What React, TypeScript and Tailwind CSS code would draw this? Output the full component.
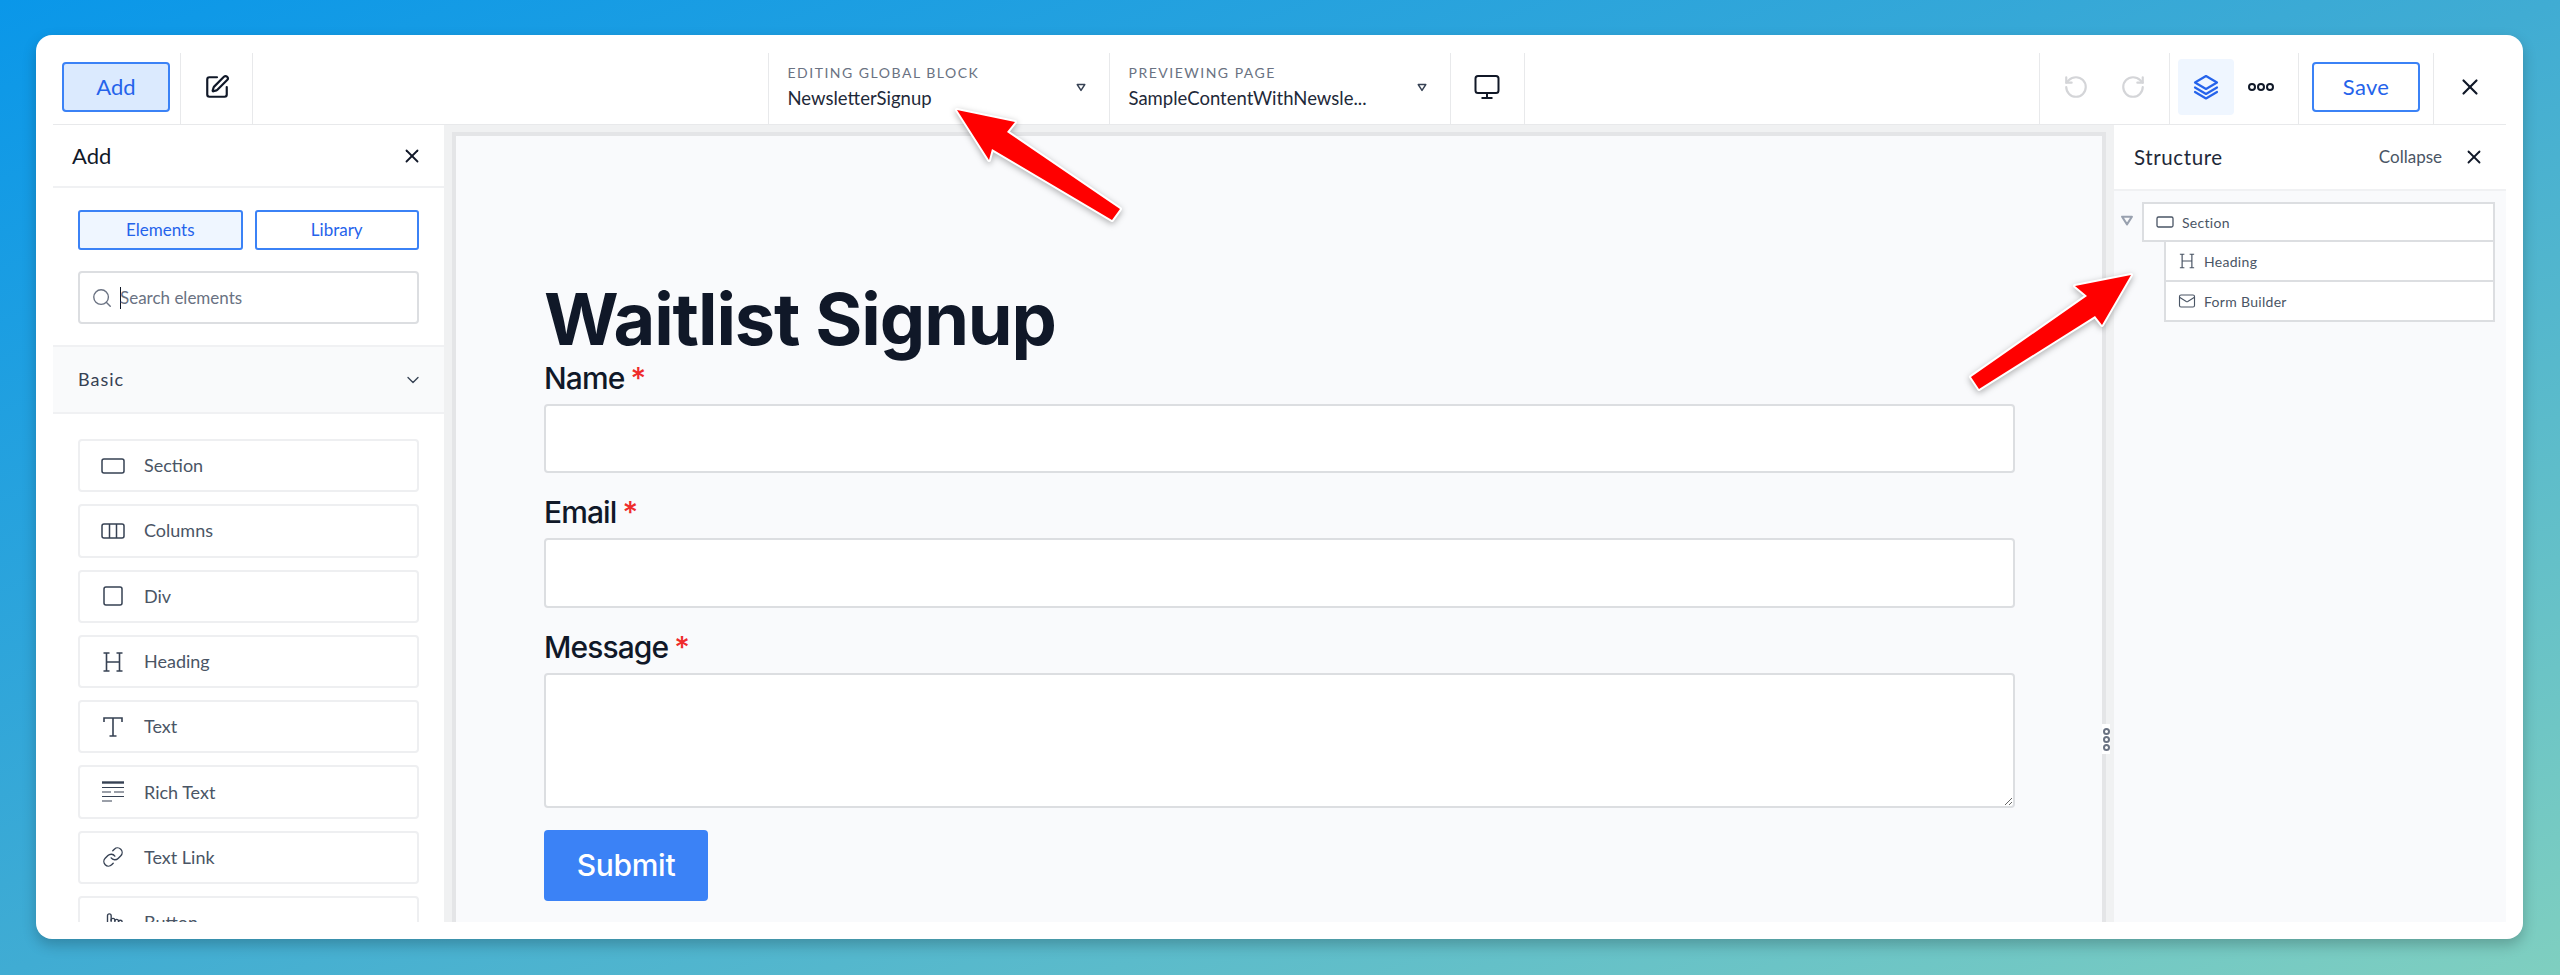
import { ChevronDown, Link as LinkIcon, Mail, Pointer, RotateCcw, RotateCw, Search, SquarePen, X } from "lucide-react";
import type { ReactNode } from "react";

const Box = ({ w = 22, h = 14 }: { w?: number; h?: number }) => (
    <svg width="24" height="24" viewBox="0 0 24 24" fill="none" stroke="currentColor" strokeWidth="1.5">
        <rect x={12 - w / 2} y={12 - h / 2} width={w} height={h} rx="2" />
    </svg>
);

const ColumnsIcon = () => (
    <svg width="24" height="24" viewBox="0 0 24 24" fill="none" stroke="currentColor" strokeWidth="1.5">
        <rect x="1" y="5" width="22" height="14" rx="2" />
        <path d="M8.5 5v14M15.5 5v14" />
    </svg>
);

const HeadingIcon = ({ size = 24 }: { size?: number }) => (
    <svg width={size} height={size} viewBox="0 0 24 24" fill="none" stroke="currentColor" strokeWidth="1.6">
        <path d="M5.5 3v18M18.5 3v18M5.5 12h13M2.5 3h6M15.5 3h6M2.5 21h6M15.5 21h6" />
    </svg>
);

const TextIcon = () => (
    <svg width="24" height="24" viewBox="0 0 24 24" fill="none" stroke="currentColor" strokeWidth="1.6">
        <path d="M12 3v18M8.5 21h7M3 7V3h18v4" />
    </svg>
);

const RichTextIcon = () => (
    <svg width="24" height="24" viewBox="0 0 24 24" fill="none" stroke="currentColor">
        <path strokeWidth="2.4" d="M1 2.5h22" />
        <path strokeWidth="1.1" d="M1 7.5h22M1 12h9M13 12h10M1 16.5h22M1 21h10" />
    </svg>
);

const LayersIcon = () => (
    <svg width="28" height="28" viewBox="0 0 28 28" fill="none" stroke="#2563eb" strokeWidth="2.2" strokeLinejoin="round" strokeLinecap="round">
        <path d="M14 3 3 9.5 14 16l11-6.5L14 3Z" />
        <path d="m3 14.5 11 6.5 11-6.5" />
        <path d="m3 19 11 6.5L25 19" />
    </svg>
);

const MonitorIcon = () => (
    <svg width="26" height="26" viewBox="0 0 26 26" fill="none" stroke="#111827" strokeWidth="2">
        <rect x="1.5" y="2" width="23" height="17" rx="2.5" />
        <path d="M13 19v4M7.5 24h11" />
    </svg>
);

const Triangle = ({ className = "" }: { className?: string }) => (
    <svg viewBox="0 0 12 10" fill="none" stroke="currentColor" strokeWidth="1.8" strokeLinejoin="round" className={className}>
        <path d="M1.5 1.5h9L6 8.5Z" />
    </svg>
);

const Dots = ({ vertical = false }: { vertical?: boolean }) => (
    <div className={`flex items-center gap-[1px] ${vertical ? "flex-col" : ""}`}>
        {[0, 1, 2].map((i) => (
            <span
                key={i}
                className={vertical ? "h-[7px] w-[7px] rounded-full border-2 border-gray-500" : "h-[8px] w-[8px] rounded-full border-2 border-gray-900"}
            />
        ))}
    </div>
);

const ELEMENTS: { label: string; icon: ReactNode }[] = [
    { label: "Section", icon: <Box /> },
    { label: "Columns", icon: <ColumnsIcon /> },
    { label: "Div", icon: <Box w={18} h={18} /> },
    { label: "Heading", icon: <HeadingIcon /> },
    { label: "Text", icon: <TextIcon /> },
    { label: "Rich Text", icon: <RichTextIcon /> },
    { label: "Text Link", icon: <LinkIcon size={22} strokeWidth={1.5} /> },
    { label: "Button", icon: <Pointer size={22} strokeWidth={1.5} /> },
];

function Toolbar() {
    return (
        <header className="flex h-[72px] shrink-0 justify-between border-b border-[#e8e9eb]">
            <div className="flex">
                <div className="flex w-[127px] items-center pb-[4px] pl-[9px]">
                    <button className="h-[50px] w-[108px] rounded-[4px] border-2 border-[#3b82f6] bg-[#dbeafe] text-[22px] text-[#2563eb]">Add</button>
                </div>
                <div className="flex w-[73px] items-center justify-center border-x border-[#e8e9eb] pb-[4px] text-gray-900">
                    <SquarePen size={26} strokeWidth={2} />
                </div>
            </div>

            <div className="flex border-r border-[#e8e9eb]">
                <div className="relative h-full w-[341px] border-l border-[#e8e9eb] pl-[19px] pt-[12px]">
                    <div className="text-[14px] leading-[16px] tracking-[1.5px] text-gray-500">EDITING GLOBAL BLOCK</div>
                    <div className="mt-[6px] text-[18.5px] leading-[22px] text-gray-800">NewsletterSignup</div>
                    <Triangle className="absolute right-[23px] top-[30px] h-[9px] w-[10px] text-gray-700" />
                </div>
                <div className="relative h-full w-[341px] border-l border-[#e8e9eb] pl-[19px] pt-[12px]">
                    <div className="text-[14px] leading-[16px] tracking-[1.5px] text-gray-500">PREVIEWING PAGE</div>
                    <div className="mt-[6px] text-[18.5px] leading-[22px] text-gray-800">SampleContentWithNewsle...</div>
                    <Triangle className="absolute right-[23px] top-[30px] h-[9px] w-[10px] text-gray-700" />
                </div>
                <div className="flex w-[74px] items-center justify-center border-l border-[#e8e9eb] pb-[4px]">
                    <MonitorIcon />
                </div>
            </div>

            <div className="flex">
                <div className="flex w-[130px] items-center justify-center gap-[31px] border-l border-[#e8e9eb] pb-[4px] text-[#d4d5d8]">
                    <RotateCcw size={26} strokeWidth={2} />
                    <RotateCw size={26} strokeWidth={2} />
                </div>
                <div className="flex w-[129px] items-center border-l border-[#e8e9eb] pb-[4px] pl-[8px]">
                    <div className="flex h-[56px] w-[56px] items-center justify-center rounded-[4px] bg-[#eff6ff]">
                        <LayersIcon />
                    </div>
                    <div className="flex flex-1 justify-center pr-[10px]">
                        <Dots />
                    </div>
                </div>
                <div className="flex w-[135px] items-center justify-center border-l border-[#e8e9eb] pb-[4px]">
                    <button className="h-[50px] w-[108px] rounded-[4px] border-2 border-[#3b82f6] bg-white text-[22px] tracking-[0.3px] text-[#2563eb]">Save</button>
                </div>
                <div className="flex w-[73px] items-center justify-center border-l border-[#e8e9eb] pb-[4px] text-gray-900">
                    <X size={26} strokeWidth={2} />
                </div>
            </div>
        </header>
    );
}

function AddPanel() {
    return (
        <aside className="flex w-[391px] shrink-0 flex-col overflow-hidden bg-white">
            <div className="flex h-[63px] shrink-0 items-center justify-between border-b-2 border-[#f0f1f3] pl-[19px] pr-[21px]">
                <span className="text-[22px] text-gray-900">Add</span>
                <X size={22} strokeWidth={2} className="text-gray-900" />
            </div>
            <div className="flex shrink-0 gap-[12px] px-[25px] pt-[22px]">
                <button className="h-[40px] flex-1 rounded-[3px] border-2 border-[#3b82f6] bg-[#eff6ff] text-[17px] text-[#2563eb]">Elements</button>
                <button className="h-[40px] flex-1 rounded-[3px] border-2 border-[#3b82f6] bg-white text-[17px] text-[#2563eb]">Library</button>
            </div>
            <div className="mx-[25px] mt-[21px] flex h-[53px] shrink-0 items-center rounded-[4px] border-2 border-[#dcdee1] pl-[11px]">
                <Search size={22} strokeWidth={1.5} className="text-gray-500" />
                <span className="ml-[7px] -mr-px h-[22px] w-px bg-gray-900" />
                <span className="text-[17px] text-gray-500">Search elements</span>
            </div>
            <div className="mt-[21px] flex h-[69px] shrink-0 items-center justify-between border-y-2 border-[#f0f1f3] bg-[#f9fafb] pl-[25px] pr-[21px]">
                <span className="text-[18px] tracking-[1px] text-gray-700">Basic</span>
                <ChevronDown size={20} strokeWidth={1.6} className="text-gray-700" />
            </div>
            <div className="flex flex-col gap-[12px] px-[25px] pt-[25px]">
                {ELEMENTS.map((el) => (
                    <div key={el.label} className="flex h-[53.3px] shrink-0 items-center rounded-[4px] border-2 border-[#eeeff1] pl-[21px] text-gray-600">
                        <span className="flex w-[24px] justify-center text-gray-700">{el.icon}</span>
                        <span className="ml-[19px] text-[18px]">{el.label}</span>
                    </div>
                ))}
            </div>
        </aside>
    );
}

function Field({ label, children }: { label: string; children: ReactNode }) {
    return (
        <div>
            <label className="block text-[30px] font-medium leading-[36px] tracking-[-0.9px] text-gray-900">
                {label}
                <span className="ml-[6px] text-[#ef2b2b]">*</span>
            </label>
            {children}
        </div>
    );
}

function Canvas() {
    return (
        <main className="flex min-w-0 flex-1 bg-[#f0f1f2] pl-[12px] pr-[12px] pt-[11px]">
            <div className="relative flex-1 bg-[#f9fafc] pl-[88px] pr-[87px] pt-[142px] shadow-[0_0_0_4px_#e4e5e7]">
                <h1 className="font-[Inter,sans-serif] text-[72px] font-bold leading-[82px] tracking-[-1.1px] text-gray-900">Waitlist Signup</h1>
                <div className="font-[Inter,sans-serif]">
                    <div className="flex flex-col gap-[21px]">
                        <Field label="Name">
                            <input className="mt-[8px] block h-[69px] w-full rounded-[4px] border-2 border-[#dcdee1] bg-white" />
                        </Field>
                        <Field label="Email">
                            <input className="mt-[8px] block h-[70px] w-full rounded-[4px] border-2 border-[#dcdee1] bg-white" />
                        </Field>
                        <Field label="Message">
                            <textarea className="mt-[8px] block h-[135px] w-full rounded-[4px] border-2 border-[#dcdee1] bg-white" />
                        </Field>
                    </div>
                    <button className="mt-[22px] h-[71px] w-[164px] rounded-[4px] bg-[#3b82f6] text-[30px] font-medium tracking-[-0.3px] text-white">Submit</button>
                </div>
                <div className="absolute right-[-8px] top-[588px] flex h-[30px] w-[8px] items-center justify-center bg-white">
                    <Dots vertical />
                </div>
            </div>
        </main>
    );
}

function StructurePanel() {
    return (
        <aside className="flex w-[392px] shrink-0 flex-col bg-[#f9fafc]">
            <div className="flex h-[66px] shrink-0 items-center border-b-2 border-[#f0f1f3] bg-white pl-[20px] pr-[21px]">
                <span className="text-[20.5px] tracking-[0.6px] text-gray-800">Structure</span>
                <span className="ml-auto text-[17px] text-gray-600">Collapse</span>
                <X size={22} strokeWidth={2} className="ml-[21px] text-gray-900" />
            </div>
            <div className="relative pl-[28px] pr-[11px] pt-[11px] text-[14px] tracking-[0.3px] text-gray-600">
                <Triangle className="absolute left-[6px] top-[24px] h-[11px] w-[14px] text-gray-400" />
                <div className="flex h-[40px] items-center border-2 border-[#dcdee1] bg-white pl-[12px]">
                    <span className="flex w-[18px] justify-center text-gray-600">
                        <svg width="18" height="14" viewBox="0 0 18 14" fill="none" stroke="currentColor" strokeWidth="1.3">
                            <rect x="1" y="2" width="16" height="10" rx="1.5" />
                        </svg>
                    </span>
                    <span className="ml-[8px]">Section</span>
                </div>
                <div className="ml-[22px]">
                    <div className="-mt-[2px] flex h-[42px] items-center border-2 border-[#dcdee1] bg-white pl-[12px]">
                        <span className="flex w-[18px] justify-center text-gray-600">
                            <HeadingIcon size={18} />
                        </span>
                        <span className="ml-[8px]">Heading</span>
                    </div>
                    <div className="-mt-[2px] flex h-[42px] items-center border-2 border-[#dcdee1] bg-white pl-[12px]">
                        <span className="flex w-[18px] justify-center text-gray-600">
                            <Mail size={18} strokeWidth={1.5} />
                        </span>
                        <span className="ml-[8px]">Form Builder</span>
                    </div>
                </div>
            </div>
        </aside>
    );
}

export default function App() {
    return (
        <div className="relative h-[975px] overflow-hidden bg-[linear-gradient(to_bottom_right,#0a97e9,#40acd3_50%,#7fcfc0)] pl-[36px] pr-[37px] pt-[35px] font-[Lato,sans-serif]">
            <div className="h-[904px] rounded-[16px] bg-white px-[17px] pb-[17px] pt-[18px] shadow-[0_6px_14px_rgba(0,0,0,0.22)]">
                <div className="flex h-full flex-col overflow-hidden">
                    <Toolbar />
                    <div className="flex min-h-0 flex-1">
                        <AddPanel />
                        <Canvas />
                        <StructurePanel />
                    </div>
                </div>
            </div>

            {/* annotation arrows */}
            <svg className="pointer-events-none absolute inset-0 drop-shadow-[0_2px_3px_rgba(0,0,0,0.3)]" width="2560" height="975" fill="#ff0000" stroke="#ffffff" strokeWidth="4" strokeLinejoin="round" paintOrder="stroke">
                <polygon points="957,110 1015,122 1007,132 1120,209 1112,220 992,149 989,160" />
                <polygon points="2131,275 2075,286 2087,296 1971,377 1979,389 2095,316 2102,325" />
            </svg>
        </div>
    );
}
